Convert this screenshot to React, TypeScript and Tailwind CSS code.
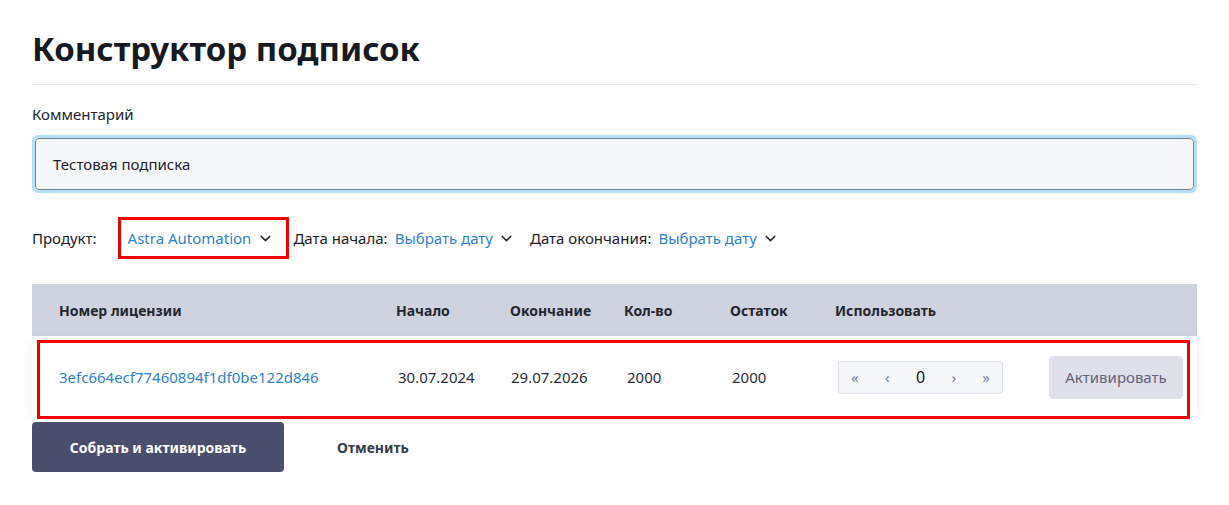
import { ChevronDown } from "lucide-react";

const COLS = "grid grid-cols-[337px_114px_114px_106px_105px_1fr] items-center pl-[27px] pr-[14px]";

function Picker({ label, value }: { label: string; value: string }) {
  return (
    <div className="flex items-center">
      <span className="text-[#1d2029]">{label}</span>
      <span className="ml-[7px] text-[#2f7fd0]">{value}</span>
      <ChevronDown size={17} strokeWidth={2} className="ml-[5px] text-[#2a2d36]" />
    </div>
  );
}

function Stepper() {
  return (
    <div className="flex h-[33px] w-[165px] items-center justify-between rounded-[3px] border border-[#dcdde6] bg-[#f6f7f9] px-[12px] text-[15px] text-[#7283a8]">
      <span>«</span>
      <span>‹</span>
      <span className="text-[16px] text-[#111]">0</span>
      <span>›</span>
      <span>»</span>
    </div>
  );
}

export default function App() {
  return (
    <div className="min-h-[505px] bg-white px-[32px] pt-[27px] font-['Noto_Sans',sans-serif] text-[15px]">
      <h1 className="text-[33px] font-bold leading-[44px] text-[#171a22]">Конструктор подписок</h1>
      <div className="mt-[13px] h-px bg-[#e3e3e6]" />

      <div className="mt-[18px] text-[15px] leading-[22px] text-[#23262f]">Комментарий</div>
      <div className="mt-[10px] rounded-[6px] border-[3px] border-[#b6e0f6]">
        <div className="flex h-[52px] items-center rounded-[4px] border border-[#7d809c] bg-[#f6f7f9] px-[17px] text-[#1f222b]">
          Тестовая подписка
        </div>
      </div>

      <div className="mt-[24px] flex h-[42px] items-center text-[15px]">
        <span className="text-[#1d2029]">Продукт:</span>
        <div className="ml-[21px] flex h-[42px] items-center border-[3px] border-[#f00000] pl-[7px] pr-[12px]">
          <span className="text-[#2f7fd0]">Astra Automation</span>
          <ChevronDown size={17} strokeWidth={2} className="ml-[6px] text-[#2a2d36]" />
        </div>
        <div className="ml-[4px]">
          <Picker label="Дата начала:" value="Выбрать дату" />
        </div>
        <div className="ml-[15px]">
          <Picker label="Дата окончания:" value="Выбрать дату" />
        </div>
      </div>

      <div className="mt-[25px]">
        <div className={`${COLS} h-[52px] bg-[#cfd3df] text-[14px] font-bold text-[#23262f]`}>
          <span>Номер лицензии</span>
          <span>Начало</span>
          <span>Окончание</span>
          <span>Кол-во</span>
          <span>Остаток</span>
          <span>Использовать</span>
        </div>

        <div className="relative mt-[2px]">
          <div className={`${COLS} h-[78px] bg-white text-[15px] text-[#2a2d36] shadow-[0_2px_10px_rgba(0,0,0,0.07)]`}>
            <span className="text-[#2f7fd0]">3efc664ecf77460894f1df0be122d846</span>
            <span className="pl-[2px]">30.07.2024</span>
            <span className="pl-[1px]">29.07.2026</span>
            <span className="pl-[3px]">2000</span>
            <span className="pl-[2px]">2000</span>
            <div className="flex items-center justify-between pl-[3px]">
              <Stepper />
              <button className="h-[43px] w-[134px] rounded-[4px] bg-[#dfe0ea] text-[15px] text-[#5f6379]">
                Активировать
              </button>
            </div>
          </div>
          <div className="pointer-events-none absolute top-[2px] bottom-[-3px] left-[5px] right-[7px] border-[3px] border-[#f00000]" />
        </div>
      </div>

      <div className="mt-[6px] flex items-center">
        <button className="h-[50px] w-[252px] rounded-[4px] bg-[#4a4e6d] text-[14px] font-bold text-white">
          Собрать и активировать
        </button>
        <button className="ml-[53px] text-[14px] font-bold text-[#383b47]">Отменить</button>
      </div>
    </div>
  );
}
